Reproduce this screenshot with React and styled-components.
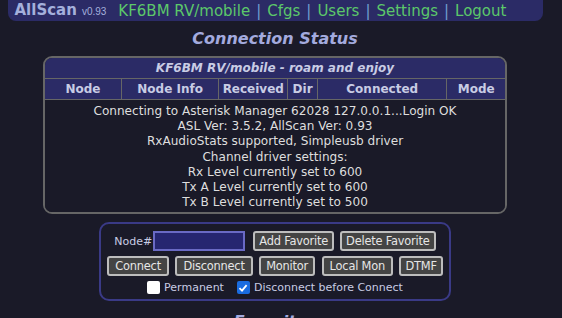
import styled, { createGlobalStyle } from "styled-components";

const GlobalStyle = createGlobalStyle`
  html, body {
    margin: 0;
    padding: 0;
    background: #1a1a28;
    overflow: hidden;
  }
  body {
    font-family: "DejaVu Sans", Verdana, sans-serif;
    color: #dcdcdc;
  }
`;

const Page = styled.div`
  width: 550px;
  height: 318px;
  display: flex;
  flex-direction: column;
  align-items: center;
  overflow: hidden;
  & > * {
    flex-shrink: 0;
  }
`;

const TopBar = styled.div`
  width: 535px;
  height: 21px;
  box-sizing: border-box;
  padding: 0 0 1px 7px;
  background: #2b2b66;
  border-radius: 0 0 8px 8px;
  display: flex;
  align-items: center;
  white-space: nowrap;
`;

const Brand = styled.span`
  font-family: "DejaVu Sans", Verdana, sans-serif;
  font-weight: 700;
  font-size: 15px;
  color: #a4b0dc;
`;

const Version = styled.span`
  font-family: "Liberation Sans", Arial, sans-serif;
  font-size: 10px;
  color: #a4b0dc;
  margin: 3px 12px 0 5px;
`;

const NavLink = styled.a`
  font-family: "DejaVu Sans", sans-serif;
  font-size: 15px;
  color: #5cc76a;
  text-decoration: none;
`;

const Sep = styled.span`
  font-size: 15px;
  color: #6f9fd0;
  margin: 0 6px;
`;

const SectionTitle = styled.h2`
  margin: 8px 0 0;
  font-size: 16px;
  font-weight: 700;
  font-style: italic;
  color: #a3aade;
  line-height: 20px;
`;

const StatusBox = styled.div`
  width: 464px;
  margin-top: 7px;
  box-sizing: border-box;
  border: 2px solid #666;
  border-radius: 9px;
  overflow: hidden;
`;

const Table = styled.table`
  width: 100%;
  border-collapse: collapse;
  background: #2b2b66;
`;

const Caption = styled.th`
  height: 20px;
  font-size: 12px;
  font-weight: 700;
  font-style: italic;
  color: #c8cce4;
  border-bottom: 1px solid #666;
  padding: 0;
`;

const HeadCell = styled.th`
  height: 20px;
  width: ${(p) => p.$w}px;
  font-size: 12px;
  font-weight: 700;
  color: #c8cce4;
  padding: 0;
  border-left: 1px solid #666;
  &:first-child {
    border-left: none;
  }
`;

const Info = styled.div`
  background: #1a1a28;
  border-top: 1px solid #666;
  padding: 4px 0 2px;
  text-align: center;
  font-size: 12.1px;
  line-height: 15.2px;
  color: #dedede;
`;

const ControlBox = styled.div`
  width: 352px;
  margin-top: 8px;
  box-sizing: border-box;
  border: 2px solid #3a3a86;
  border-radius: 10px;
  padding: 7px 0 5px;
  display: flex;
  flex-direction: column;
  align-items: center;
  gap: 5px;
`;

const Row = styled.div`
  display: flex;
  align-items: center;
  gap: ${(p) => p.$gap || 6}px;
`;

const Label = styled.label`
  font-size: 11px;
  color: #c8cce4;
  margin-right: -5px;
`;

const NodeInput = styled.input`
  width: 92px;
  height: 20px;
  box-sizing: border-box;
  background: #262670;
  border: 2px solid #6a6ac4;
  margin: 0 2px 0 0;
  color: #fff;
`;

const Button = styled.button`
  height: 20px;
  box-sizing: border-box;
  padding: 0 ${(p) => p.$pad || 4}px;
  background: #444;
  color: #e6e6e6;
  border: 2px solid #bdbdbd;
  border-radius: 3px;
  font-family: "DejaVu Sans", sans-serif;
  font-size: 11.4px;
  letter-spacing: -0.2px;
  line-height: 1;
`;

const Check = styled.label`
  display: flex;
  align-items: center;
  gap: 4px;
  font-size: 11px;
  color: #c8cce4;
`;

const Box = styled.span`
  width: 13px;
  height: 13px;
  box-sizing: border-box;
  border-radius: 2px;
  background: ${(p) => (p.$on ? "#1a6ce0" : "#fff")};
  display: flex;
  align-items: center;
  justify-content: center;
`;

const NextTitle = styled(SectionTitle)`
  margin-top: 11px;
`;

const columns = [
  ["Node", 77],
  ["Node Info", 98],
  ["Received", 68],
  ["Dir", 29],
  ["Connected", 130],
  ["Mode", 58],
];

const lines = [
  "Connecting to Asterisk Manager 62028 127.0.0.1...Login OK",
  "ASL Ver: 3.5.2, AllScan Ver: 0.93",
  "RxAudioStats supported, Simpleusb driver",
  "Channel driver settings:",
  "Rx Level currently set to 600",
  "Tx A Level currently set to 600",
  "Tx B Level currently set to 500",
];

const links = ["KF6BM RV/mobile", "Cfgs", "Users", "Settings", "Logout"];

const actions = [
  ["Connect", 6],
  ["Disconnect", 6],
  ["Monitor", 5],
  ["Local Mon", 6],
  ["DTMF", 4],
];

export default function App() {
  return (
    <>
      <GlobalStyle />
      <Page>
        <TopBar>
          <Brand>AllScan</Brand>
          <Version>v0.93</Version>
          {links.map((l, i) => (
            <span key={l}>
              {i > 0 && <Sep>|</Sep>}
              <NavLink href="#">{l}</NavLink>
            </span>
          ))}
        </TopBar>
        <SectionTitle>Connection Status</SectionTitle>
        <StatusBox>
          <Table>
            <thead>
              <tr>
                <Caption colSpan={6}>KF6BM RV/mobile - roam and enjoy</Caption>
              </tr>
              <tr>
                {columns.map(([c, w]) => (
                  <HeadCell key={c} $w={w}>
                    {c}
                  </HeadCell>
                ))}
              </tr>
            </thead>
          </Table>
          <Info>
            {lines.map((l) => (
              <div key={l}>{l}</div>
            ))}
          </Info>
        </StatusBox>
        <ControlBox>
          <Row>
            <Label>Node#</Label>
            <NodeInput type="text" />
            <Button>Add Favorite</Button>
            <Button>Delete Favorite</Button>
          </Row>
          <Row $gap={6.5}>
            {actions.map(([a, pad]) => (
              <Button key={a} $pad={pad}>
                {a}
              </Button>
            ))}
          </Row>
          <Row $gap={13}>
            <Check>
              <Box />
              Permanent
            </Check>
            <Check>
              <Box $on>
                <svg width="10" height="10" viewBox="0 0 10 10">
                  <path d="M1.5 5.2 L4 7.6 L8.6 2.2" stroke="#fff" strokeWidth="1.8" fill="none" />
                </svg>
              </Box>
              Disconnect before Connect
            </Check>
          </Row>
        </ControlBox>
        <NextTitle>Favorites</NextTitle>
      </Page>
    </>
  );
}
